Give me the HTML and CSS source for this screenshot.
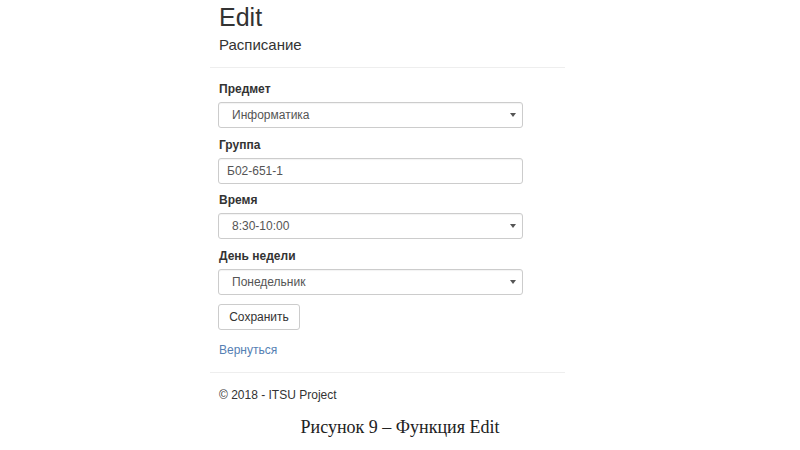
FILE: index.html
```html
<!DOCTYPE html>
<html lang="ru">
<head>
<meta charset="utf-8">
<title>Edit</title>
<link rel="stylesheet" href="styles.css">
</head>
<body>
<div class="page">
  <h1 class="title">Edit</h1>
  <h4 class="subtitle">Расписание</h4>
  <hr class="rule">
  <form class="form">
    <div class="group">
      <label class="label">Предмет</label>
      <div class="select-wrap">
        <select class="control select"><option>Информатика</option></select>
      </div>
    </div>
    <div class="group">
      <label class="label">Группа</label>
      <input class="control input" type="text" value="Б02-651-1">
    </div>
    <div class="group">
      <label class="label">Время</label>
      <div class="select-wrap">
        <select class="control select"><option>8:30-10:00</option></select>
      </div>
    </div>
    <div class="group">
      <label class="label">День недели</label>
      <div class="select-wrap">
        <select class="control select"><option>Понедельник</option></select>
      </div>
    </div>
    <button class="btn" type="button">Сохранить</button>
  </form>
  <a class="back" href="#">Вернуться</a>
  <hr class="rule rule-foot">
  <footer class="footer">© 2018 - ITSU Project</footer>
</div>
<p class="caption">Рисунок 9 – Функция Edit</p>
</body>
</html>
```
FILE: styles.css
```css
html, body {
  margin: 0;
  padding: 0;
  background: #fff;
}
body {
  width: 800px;
  height: 450px;
  overflow: hidden;
  font-family: "Liberation Sans", Arial, sans-serif;
  color: #333;
}
.page {
  margin-left: 218px;
  width: 339px;
  padding-top: 3px;
}
.title {
  margin: 0 0 0 1px;
  font-size: 25px;
  font-weight: normal;
  line-height: 28px;
  color: #333;
}
.subtitle {
  margin: 5px 0 0 1px;
  font-size: 15px;
  font-weight: normal;
  line-height: 17px;
  color: #333;
}
.rule {
  margin: 14px 0 0 -8px;
  width: 355px;
  border: 0;
  border-top: 1px solid #eee;
  height: 0;
}
.form {
  margin-top: 14px;
}
.group {
  margin-bottom: 9.5px;
}
.label {
  display: block;
  margin: 0 0 6px 1px;
  font-size: 12px;
  font-weight: bold;
  line-height: 14px;
  color: #333;
}
.select-wrap {
  position: relative;
  width: 305px;
}
.select-wrap::after {
  content: "";
  position: absolute;
  right: 7px;
  top: 11px;
  border-left: 3px solid transparent;
  border-right: 3px solid transparent;
  border-top: 4px solid #555;
}
.control {
  display: block;
  box-sizing: border-box;
  width: 305px;
  height: 26px;
  margin: 0;
  border: 1px solid #ccc;
  border-radius: 3px;
  background: #fff;
  font-family: "Liberation Sans", Arial, sans-serif;
  font-size: 12px;
  color: #555;
  box-shadow: inset 0 1px 1px rgba(0,0,0,0.05);
  outline: none;
}
.select {
  -webkit-appearance: none;
  appearance: none;
  padding: 0 0 0 13px;
}
.input {
  padding: 0 0 0 8px;
}
.btn {
  display: block;
  box-sizing: border-box;
  height: 26px;
  width: 82px;
  margin-top: 1px;
  border: 1px solid #ccc;
  border-radius: 3px;
  background: #fff;
  font-family: "Liberation Sans", Arial, sans-serif;
  font-size: 12px;
  color: #333;
  padding: 0;
}
.back {
  display: block;
  margin: 13px 0 0 1px;
  font-size: 12px;
  line-height: 14px;
  color: #5580b3;
  text-decoration: none;
}
.rule-foot {
  margin-top: 15px;
}
.footer {
  margin: 15px 0 0 1px;
  font-size: 12px;
  line-height: 14px;
  color: #333;
}
.caption {
  margin: 15px 0 0 0;
  text-align: center;
  font-family: "Liberation Serif", "Times New Roman", serif;
  font-size: 18px;
  line-height: 20px;
  color: #222;
}
```
